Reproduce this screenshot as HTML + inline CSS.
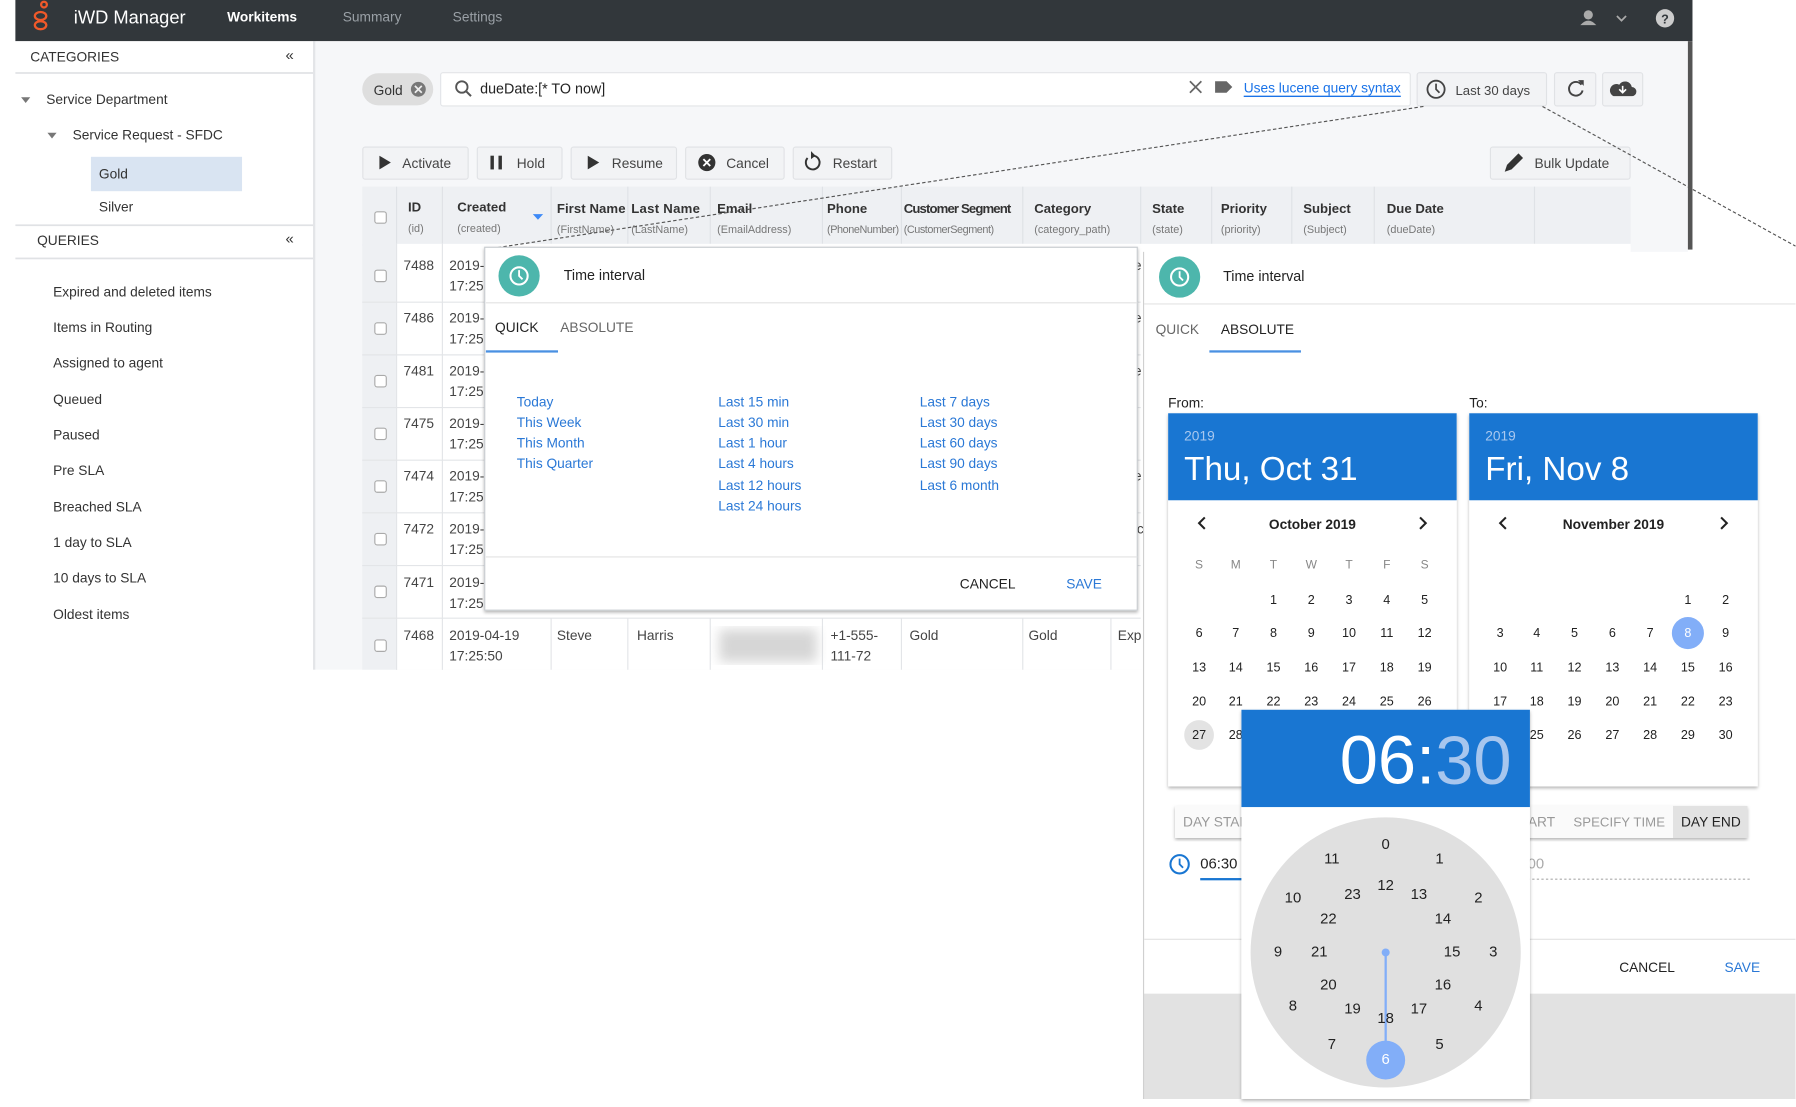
<!DOCTYPE html>
<html><head><meta charset="utf-8"><style>
html,body{margin:0;padding:0;background:#fff;width:1796px;height:1107px;overflow:hidden}
svg{display:block}
text{font-family:"Liberation Sans",sans-serif}
</style></head><body>
<svg width="1796" height="1107" viewBox="0 0 1568 967" xmlns="http://www.w3.org/2000/svg">
<defs>
<filter id="sh" x="-5%" y="-5%" width="110%" height="115%"><feDropShadow dx="0" dy="1.5" stdDeviation="1.5" flood-color="#000" flood-opacity="0.3"/></filter>
<filter id="bl"><feGaussianBlur stdDeviation="5"/></filter>
</defs>
<rect width="1568" height="967" fill="#fff"/>
<!-- header -->
<rect x="13" y="0" width="1465" height="36" fill="#32373b"/>
<g fill="none" stroke="#f0592a" stroke-width="2"><circle cx="38" cy="4" r="2.5"/><ellipse cx="35" cy="14" rx="5" ry="3.5"/><ellipse cx="35" cy="22" rx="5" ry="3.5"/></g>
<text x="64" y="15" font-size="16" fill="#fff" dominant-baseline="central">iWD Manager</text>
<text x="198" y="15" font-size="12" fill="#fff" font-weight="bold" dominant-baseline="central">Workitems</text>
<text x="299" y="15" font-size="12" fill="#9aa0a6" dominant-baseline="central">Summary</text>
<text x="395" y="15" font-size="12" fill="#9aa0a6" dominant-baseline="central">Settings</text>
<circle cx="1387" cy="13" r="4" fill="#aaa"/><path d="M1380 22 q7 -8 14 0z" fill="#aaa"/>
<path d="M1412 14 l4 4 l4 -4" stroke="#aaa" stroke-width="1.5" fill="none"/>
<circle cx="1454" cy="16" r="8" fill="#ccc"/><text x="1454" y="17" font-size="11" font-weight="bold" fill="#32373b" text-anchor="middle" dominant-baseline="central">?</text>
<!-- main bg -->
<rect x="275" y="36" width="1199" height="549" fill="#f6f7f9"/>
<rect x="1474" y="36" width="4" height="182" fill="#555"/>
<!-- sidebar -->
<rect x="13" y="36" width="260" height="549" fill="#fff"/>
<rect x="273" y="36" width="2" height="549" fill="#e3e5e8"/>
<g font-size="12" fill="#333" dominant-baseline="central">
<text x="26" y="50">CATEGORIES</text><text x="249" y="49" font-size="13">«</text>
<rect x="13" y="63" width="260" height="1.5" fill="#e0e2e5"/>
<path d="M18 85 l8 0 l-4 5z" fill="#777"/><text x="40" y="87">Service Department</text>
<path d="M41 116 l8 0 l-4 5z" fill="#777"/><text x="63" y="118">Service Request - SFDC</text>
<rect x="79" y="137" width="132" height="30" fill="#d9e4f2"/><text x="86" y="152">Gold</text>
<text x="86" y="181">Silver</text>
<rect x="13" y="196" width="260" height="1.5" fill="#e0e2e5"/>
<text x="32" y="210">QUERIES</text><text x="249" y="209" font-size="13">«</text>
<rect x="13" y="225" width="260" height="1.5" fill="#e0e2e5"/>
<text x="46" y="255">Expired and deleted items</text>
<text x="46" y="286">Items in Routing</text>
<text x="46" y="317">Assigned to agent</text>
<text x="46" y="349">Queued</text>
<text x="46" y="380">Paused</text>
<text x="46" y="411">Pre SLA</text>
<text x="46" y="443">Breached SLA</text>
<text x="46" y="474">1 day to SLA</text>
<text x="46" y="505">10 days to SLA</text>
<text x="46" y="537">Oldest items</text>
</g>
<!-- search row -->
<rect x="316" y="64" width="62" height="28" rx="14" fill="#dedede"/>
<text x="326" y="79" font-size="12" fill="#333" dominant-baseline="central">Gold</text>
<circle cx="365" cy="78" r="6.5" fill="#777"/><path d="M362 75 l6 6 M368 75 l-6 6" stroke="#eee" stroke-width="1.5"/>
<rect x="384.5" y="63.5" width="847" height="29" rx="2" fill="#fff" stroke="#e3e5e8"/>
<circle cx="403" cy="76" r="5" fill="none" stroke="#555" stroke-width="1.6"/><path d="M407 80 l4 4" stroke="#555" stroke-width="1.8"/>
<text x="419" y="78" font-size="12.5" fill="#222" dominant-baseline="central">dueDate:[* TO now]</text>
<path d="M1039 71 l10 10 M1049 71 l-10 10" stroke="#666" stroke-width="1.5"/>
<path d="M1061 71 h10 l5 5 l-5 5 h-10z" fill="#666"/>
<text x="1086" y="77" font-size="12" fill="#1a73e8" text-decoration="underline" dominant-baseline="central">Uses lucene query syntax</text>
<rect x="1237.5" y="63.5" width="113" height="29" rx="2" fill="#f2f3f5" stroke="#e0e2e5"/>
<circle cx="1254" cy="78" r="7.5" fill="none" stroke="#444" stroke-width="1.6"/><path d="M1254 73 v5 l3 3" stroke="#444" stroke-width="1.5" fill="none"/>
<text x="1271" y="79" font-size="11.5" fill="#444" dominant-baseline="central">Last 30 days</text>
<rect x="1357.5" y="63.5" width="36" height="29" rx="2" fill="#f2f3f5" stroke="#e0e2e5"/>
<path d="M1381 74 a6 6 0 1 0 1 5" fill="none" stroke="#444" stroke-width="1.7"/><path d="M1378 70 l5 0 l0 5z" fill="#444"/>
<rect x="1399.5" y="63.5" width="35" height="29" rx="2" fill="#f2f3f5" stroke="#e0e2e5"/>
<path d="M1409 84 h16 a4 4 0 0 0 0 -8 a6 6 0 0 0 -11 -2 a5 5 0 0 0 -5 10z" fill="#444"/><path d="M1417 75 v6 M1414 78 l3 3 l3 -3" stroke="#fff" stroke-width="1.4" fill="none"/>
<!-- toolbar -->
<g font-size="12" fill="#444" dominant-baseline="central">
<rect x="316.5" y="128.5" width="92" height="28" rx="2" fill="#f2f3f5" stroke="#e0e2e5"/><path d="M331 136 l10 6 l-10 6z" fill="#333"/><text x="351" y="143">Activate</text>
<rect x="416.5" y="128.5" width="74" height="28" rx="2" fill="#f2f3f5" stroke="#e0e2e5"/><rect x="428" y="136" width="3" height="12" fill="#333"/><rect x="435" y="136" width="3" height="12" fill="#333"/><text x="451" y="143">Hold</text>
<rect x="498.5" y="128.5" width="92" height="28" rx="2" fill="#f2f3f5" stroke="#e0e2e5"/><path d="M513 136 l10 6 l-10 6z" fill="#333"/><text x="534" y="143">Resume</text>
<rect x="598.5" y="128.5" width="86" height="28" rx="2" fill="#f2f3f5" stroke="#e0e2e5"/><circle cx="617" cy="142" r="7.5" fill="#333"/><path d="M614 139 l6 6 M620 139 l-6 6" stroke="#fff" stroke-width="1.6"/><text x="634" y="143">Cancel</text>
<rect x="692.5" y="128.5" width="86" height="28" rx="2" fill="#f2f3f5" stroke="#e0e2e5"/><path d="M705 138 a6 6 0 1 0 5 -2" fill="none" stroke="#333" stroke-width="1.7"/><path d="M708 132 l4 4 l-4 3z" fill="#333"/><text x="727" y="143">Restart</text>
<rect x="1301.5" y="128.5" width="122" height="28" rx="2" fill="#f2f3f5" stroke="#e0e2e5"/><path d="M1314 150 l2 -6 l10 -10 l4 4 l-10 10z" fill="#333"/><text x="1340" y="143">Bulk Update</text>
</g>
<!-- table header -->
<rect x="316" y="163" width="1108" height="52" fill="#eef0f3"/>
<g stroke="#dfe2e6" stroke-width="1">
<path d="M346 163 V585 M386 163 V585 M481 163 V213 M548 163 V213 M620 163 V213 M718 163 V213 M787 163 V213 M893 163 V213 M996 163 V213 M1058 163 V213 M1128 163 V213 M1200 163 V213 M1340 163 V213"/>
</g>
<rect x="346" y="213" width="1078" height="372" fill="#fff"/>
<rect x="316" y="213" width="30" height="372" fill="#eef0f3"/>
<g stroke="#e3e5e8"><path d="M316 264 H996 M316 310 H996 M316 356 H996 M316 402 H996 M316 448 H996 M316 494 H996 M316 540 H996 M346 213 V585 M386 213 V585 M481 540 V585 M548 540 V585 M620 540 V585 M718 540 V585 M787 540 V585 M893 540 V585 M970 540 V585"/></g>
<g font-size="11.5" fill="#333" font-weight="bold" dominant-baseline="central">
<text x="356" y="181">ID</text><text x="399" y="181">Created</text><text x="486" y="182" textLength="60">First Name</text><text x="551" y="182" textLength="60">Last Name</text><text x="626" y="182">Email</text><text x="722" y="182">Phone</text><text x="789" y="182" textLength="94">Customer Segment</text><text x="903" y="182">Category</text><text x="1006" y="182">State</text><text x="1066" y="182">Priority</text><text x="1138" y="182">Subject</text><text x="1211" y="182">Due Date</text>
</g>
<g font-size="9.5" fill="#777" dominant-baseline="central">
<text x="356" y="200">(id)</text><text x="399" y="200">(created)</text><text x="486" y="201">(FirstName)</text><text x="551" y="201">(LastName)</text><text x="626" y="201">(EmailAddress)</text><text x="722" y="201" textLength="63">(PhoneNumber)</text><text x="789" y="201" textLength="79">(CustomerSegment)</text><text x="903" y="201">(category_path)</text><text x="1006" y="201">(state)</text><text x="1066" y="201">(priority)</text><text x="1138" y="201">(Subject)</text><text x="1211" y="201">(dueDate)</text>
</g>
<path d="M465 187 h9 l-4.5 5z" fill="#3d8af7"/>
<g fill="#fff" stroke="#aaa"><rect x="327" y="185" width="10" height="10" rx="2"/><rect x="327" y="236" width="10" height="10" rx="2"/><rect x="327" y="282" width="10" height="10" rx="2"/><rect x="327" y="328" width="10" height="10" rx="2"/><rect x="327" y="374" width="10" height="10" rx="2"/><rect x="327" y="420" width="10" height="10" rx="2"/><rect x="327" y="466" width="10" height="10" rx="2"/><rect x="327" y="512" width="10" height="10" rx="2"/><rect x="327" y="559" width="10" height="10" rx="2"/></g>
<g font-size="12" fill="#444" dominant-baseline="central">
<text x="352" y="232">7488</text><text x="392" y="232">2019-</text><text x="392" y="250">17:25</text>
<text x="352" y="278">7486</text><text x="392" y="278">2019-</text><text x="392" y="296">17:25</text>
<text x="352" y="324">7481</text><text x="392" y="324">2019-</text><text x="392" y="342">17:25</text>
<text x="352" y="370">7475</text><text x="392" y="370">2019-</text><text x="392" y="388">17:25</text>
<text x="352" y="416">7474</text><text x="392" y="416">2019-</text><text x="392" y="434">17:25</text>
<text x="352" y="462">7472</text><text x="392" y="462">2019-</text><text x="392" y="480">17:25</text>
<text x="352" y="509">7471</text><text x="392" y="509">2019-</text><text x="392" y="527">17:25</text>
<text x="352" y="555">7468</text><text x="392" y="555">2019-04-19</text><text x="392" y="573">17:25:50</text>
<text x="486" y="555">Steve</text><text x="556" y="555">Harris</text><text x="725" y="555">+1-555-</text><text x="725" y="573">111-72</text><text x="794" y="555">Gold</text><text x="898" y="555">Gold</text><text x="976" y="555">Exp</text>
<text x="990" y="232">e</text><text x="990" y="278">e</text><text x="990" y="324">e</text><text x="990" y="416">e</text><text x="990" y="462">lc</text>
</g>
<rect x="628" y="550" width="85" height="28" fill="#d6d6d6" filter="url(#bl)"/>
<!-- dotted lines -->
<path d="M1243 93 L423 218 M1347 93 L1568 215" stroke="#555" stroke-width="1" stroke-dasharray="3 2" fill="none"/>
<!-- quick popup -->
<rect x="423" y="216" width="570" height="317" fill="#fff" stroke="#c8ccd0" filter="url(#sh)"/>
<circle cx="453" cy="241" r="18" fill="#4db6ac"/><circle cx="453" cy="241" r="7.5" fill="none" stroke="#fff" stroke-width="1.8"/><path d="M453 236 v5 l3 3" stroke="#fff" stroke-width="1.6" fill="none"/>
<text x="492" y="241" font-size="12.5" fill="#222" dominant-baseline="central">Time interval</text>
<rect x="424" y="264" width="569" height="1" fill="#e3e3e3"/>
<text x="432" y="286" font-size="12" fill="#222" dominant-baseline="central">QUICK</text>
<text x="489" y="286" font-size="12" fill="#666" dominant-baseline="central">ABSOLUTE</text>
<rect x="424" y="306" width="63" height="2" fill="#4a90e2"/>
<g font-size="12" fill="#2a78d6" dominant-baseline="central">
<text x="451" y="351">Today</text><text x="451" y="369">This Week</text><text x="451" y="387">This Month</text><text x="451" y="405">This Quarter</text>
<text x="627" y="351">Last 15 min</text><text x="627" y="369">Last 30 min</text><text x="627" y="387">Last 1 hour</text><text x="627" y="405">Last 4 hours</text><text x="627" y="424">Last 12 hours</text><text x="627" y="442">Last 24 hours</text>
<text x="803" y="351">Last 7 days</text><text x="803" y="369">Last 30 days</text><text x="803" y="387">Last 60 days</text><text x="803" y="405">Last 90 days</text><text x="803" y="424">Last 6 month</text>
</g>
<rect x="424" y="486" width="569" height="1" fill="#e3e3e3"/>
<text x="838" y="510" font-size="12" fill="#222" dominant-baseline="central">CANCEL</text>
<text x="931" y="510" font-size="12" fill="#2a78d6" dominant-baseline="central">SAVE</text>
<!-- absolute panel -->
<rect x="998" y="220" width="570" height="747" fill="#fff"/>
<rect x="998" y="868" width="570" height="92" fill="#e2e2e2"/>
<rect x="998" y="220" width="1" height="740" fill="#d0d0d0"/>
<circle cx="1030" cy="242" r="18" fill="#4db6ac"/><circle cx="1030" cy="242" r="7.5" fill="none" stroke="#fff" stroke-width="1.8"/><path d="M1030 237 v5 l3 3" stroke="#fff" stroke-width="1.6" fill="none"/>
<text x="1068" y="242" font-size="12.5" fill="#222" dominant-baseline="central">Time interval</text>
<rect x="999" y="265" width="569" height="1" fill="#e3e3e3"/>
<text x="1009" y="288" font-size="12" fill="#666" dominant-baseline="central">QUICK</text>
<text x="1066" y="288" font-size="12" fill="#222" dominant-baseline="central">ABSOLUTE</text>
<rect x="1056" y="306" width="80" height="2" fill="#4a90e2"/>
<text x="1020" y="352" font-size="12" fill="#222" dominant-baseline="central">From:</text>
<text x="1283" y="352" font-size="12" fill="#222" dominant-baseline="central">To:</text>
<!-- from card -->
<rect x="1020" y="361" width="252" height="326" fill="#fff" filter="url(#sh)"/>
<rect x="1020" y="361" width="252" height="76" fill="#1976d2"/>
<text x="1034" y="381" font-size="12" fill="#a9c8ef" dominant-baseline="central">2019</text>
<text x="1034" y="410" font-size="29" fill="#fff" dominant-baseline="central">Thu, Oct 31</text>
<path d="M1052 452 l-5 5 l5 5 M1240 452 l5 5 l-5 5" stroke="#222" stroke-width="1.8" fill="none"/>
<text x="1146" y="458" font-size="12" font-weight="bold" fill="#222" text-anchor="middle" dominant-baseline="central">October 2019</text>
<circle cx="1047" cy="642" r="13" fill="#e3e3e3"/>
<g font-size="10.5" fill="#888" text-anchor="middle" dominant-baseline="central">
<text x="1047" y="493">S</text><text x="1079" y="493">M</text><text x="1112" y="493">T</text><text x="1145" y="493">W</text><text x="1178" y="493">T</text><text x="1211" y="493">F</text><text x="1244" y="493">S</text>
<text x="1310" y="493">S</text><text x="1342" y="493">M</text><text x="1375" y="493">T</text><text x="1408" y="493">W</text><text x="1441" y="493">T</text><text x="1474" y="493">F</text><text x="1507" y="493">S</text>
</g>
<g font-size="11" fill="#222" text-anchor="middle" dominant-baseline="central">
<text x="1112" y="524">1</text><text x="1145" y="524">2</text><text x="1178" y="524">3</text><text x="1211" y="524">4</text><text x="1244" y="524">5</text>
<text x="1047" y="553">6</text><text x="1079" y="553">7</text><text x="1112" y="553">8</text><text x="1145" y="553">9</text><text x="1178" y="553">10</text><text x="1211" y="553">11</text><text x="1244" y="553">12</text>
<text x="1047" y="583">13</text><text x="1079" y="583">14</text><text x="1112" y="583">15</text><text x="1145" y="583">16</text><text x="1178" y="583">17</text><text x="1211" y="583">18</text><text x="1244" y="583">19</text>
<text x="1047" y="613">20</text><text x="1079" y="613">21</text><text x="1112" y="613">22</text><text x="1145" y="613">23</text><text x="1178" y="613">24</text><text x="1211" y="613">25</text><text x="1244" y="613">26</text>
<text x="1047" y="642">27</text><text x="1079" y="642">28</text>
</g>
<!-- to card -->
<rect x="1283" y="361" width="252" height="326" fill="#fff" filter="url(#sh)"/>
<rect x="1283" y="361" width="252" height="76" fill="#1976d2"/>
<text x="1297" y="381" font-size="12" fill="#a9c8ef" dominant-baseline="central">2019</text>
<text x="1297" y="410" font-size="29" fill="#fff" dominant-baseline="central">Fri, Nov 8</text>
<path d="M1315 452 l-5 5 l5 5 M1503 452 l5 5 l-5 5" stroke="#222" stroke-width="1.8" fill="none"/>
<text x="1409" y="458" font-size="12" font-weight="bold" fill="#222" text-anchor="middle" dominant-baseline="central">November 2019</text>
<circle cx="1474" cy="553" r="14" fill="#82aef8"/>
<g font-size="11" fill="#222" text-anchor="middle" dominant-baseline="central">
<text x="1474" y="524">1</text><text x="1507" y="524">2</text>
<text x="1310" y="553">3</text><text x="1342" y="553">4</text><text x="1375" y="553">5</text><text x="1408" y="553">6</text><text x="1441" y="553">7</text><text x="1474" y="553" fill="#fff">8</text><text x="1507" y="553">9</text>
<text x="1310" y="583">10</text><text x="1342" y="583">11</text><text x="1375" y="583">12</text><text x="1408" y="583">13</text><text x="1441" y="583">14</text><text x="1474" y="583">15</text><text x="1507" y="583">16</text>
<text x="1310" y="613">17</text><text x="1342" y="613">18</text><text x="1375" y="613">19</text><text x="1408" y="613">20</text><text x="1441" y="613">21</text><text x="1474" y="613">22</text><text x="1507" y="613">23</text>
<text x="1342" y="642">25</text><text x="1375" y="642">26</text><text x="1408" y="642">27</text><text x="1441" y="642">28</text><text x="1474" y="642">29</text><text x="1507" y="642">30</text>
</g>
<!-- buttons row -->
<rect x="1026" y="704" width="240" height="28" fill="#fafafa" filter="url(#sh)"/>
<text x="1033" y="718" font-size="12" fill="#999" dominant-baseline="central">DAY START</text>
<rect x="1290" y="704" width="236" height="28" fill="#fafafa" filter="url(#sh)"/>
<text x="1358" y="718" font-size="12" fill="#999" text-anchor="end" dominant-baseline="central">DAY START</text>
<text x="1374" y="718" font-size="11.5" fill="#999" textLength="80" dominant-baseline="central">SPECIFY TIME</text>
<rect x="1461" y="704" width="65" height="28" fill="#e2e2e2"/>
<text x="1468" y="718" font-size="12" fill="#222" dominant-baseline="central">DAY END</text>
<circle cx="1030" cy="755" r="8" fill="none" stroke="#1976d2" stroke-width="1.8"/><path d="M1030 750 v5 l3 3" stroke="#1976d2" stroke-width="1.6" fill="none"/>
<text x="1048" y="755" font-size="13" fill="#222" dominant-baseline="central">06:30</text>
<rect x="1048" y="767" width="40" height="2" fill="#1976d2"/>
<text x="1334" y="755" font-size="13" fill="#aaa" dominant-baseline="central">00</text>
<path d="M1334 768 H1530" stroke="#aaa" stroke-dasharray="2 2"/>
<rect x="999" y="820" width="569" height="1" fill="#e3e3e3"/>
<text x="1414" y="845" font-size="12" fill="#222" dominant-baseline="central">CANCEL</text>
<text x="1506" y="845" font-size="12" fill="#2a78d6" dominant-baseline="central">SAVE</text>
<!-- time picker -->
<rect x="1084" y="620" width="252" height="340" fill="#fff" filter="url(#sh)"/>
<rect x="1084" y="620" width="252" height="85" fill="#1976d2"/>
<text x="1320" y="664" font-size="60" fill="#fff" text-anchor="end" dominant-baseline="central">06:<tspan fill="#a7c6ee">30</tspan></text>
<circle cx="1210" cy="832" r="118" fill="#e0e0e0"/>
<path d="M1210 832 V926" stroke="#82aef8" stroke-width="2"/>
<circle cx="1210" cy="832" r="3.5" fill="#82aef8"/>
<circle cx="1210" cy="926" r="17" fill="#82aef8"/>
<g font-size="13" fill="#222" text-anchor="middle" dominant-baseline="central">
<text x="1210" y="738">0</text><text x="1257" y="751">1</text><text x="1291" y="785">2</text><text x="1304" y="832">3</text><text x="1291" y="879">4</text><text x="1257" y="913">5</text><text x="1210" y="926" fill="#fff">6</text><text x="1163" y="913">7</text><text x="1129" y="879">8</text><text x="1116" y="832">9</text><text x="1129" y="785">10</text><text x="1163" y="751">11</text>
<text x="1210" y="774">12</text><text x="1239" y="782">13</text><text x="1260" y="803">14</text><text x="1268" y="832">15</text><text x="1260" y="861">16</text><text x="1239" y="882">17</text><text x="1210" y="890">18</text><text x="1181" y="882">19</text><text x="1160" y="861">20</text><text x="1152" y="832">21</text><text x="1160" y="803">22</text><text x="1181" y="782">23</text>
</g>
</svg>
</body></html>
